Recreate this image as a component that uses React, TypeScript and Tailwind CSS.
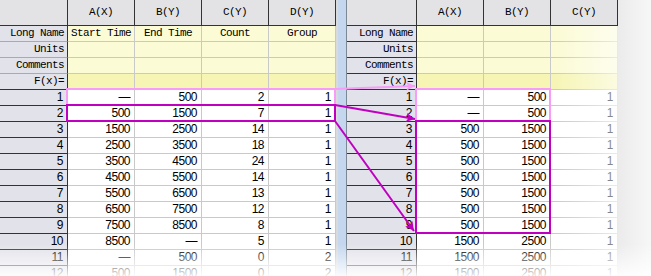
import React from "react";

const LABELS = ["Long Name", "Units", "Comments", "F(x)="];

const LEFT_COLS = ["A(X)", "B(Y)", "C(Y)", "D(Y)"];
const LEFT_LONG = ["Start Time", "End Time", "Count", "Group"];
const LEFT_ROWS: string[][] = [
  ["—", "500", "2", "1"],
  ["500", "1500", "7", "1"],
  ["1500", "2500", "14", "1"],
  ["2500", "3500", "18", "1"],
  ["3500", "4500", "24", "1"],
  ["4500", "5500", "14", "1"],
  ["5500", "6500", "13", "1"],
  ["6500", "7500", "12", "1"],
  ["7500", "8500", "8", "1"],
  ["8500", "—", "5", "1"],
  ["—", "500", "0", "2"],
  ["500", "1500", "0", "2"],
];

const RIGHT_COLS = ["A(X)", "B(Y)", "C(Y)"];
const RIGHT_ROWS: string[][] = [
  ["—", "500", "1"],
  ["—", "500", "1"],
  ["500", "1500", "1"],
  ["500", "1500", "1"],
  ["500", "1500", "1"],
  ["500", "1500", "1"],
  ["500", "1500", "1"],
  ["500", "1500", "1"],
  ["500", "1500", "1"],
  ["1500", "2500", "1"],
  ["1500", "2500", "1"],
  ["1500", "2500", "1"],
];

const mono = "font-['Liberation_Mono',monospace] text-[11px] tracking-[-0.6px] text-black";
const num = "font-['Liberation_Sans',Arial,sans-serif] text-[12px] tracking-[-0.5px] text-black";

function Sheet({
  cols,
  longNames,
  rows,
  headW,
  labelLine,
}: {
  cols: string[];
  longNames: string[];
  rows: string[][];
  headW: string;
  labelLine: string;
}) {
  return (
    <div className="flex flex-col">
      {/* column headers */}
      <div className="flex h-[26px]">
        <div className={`${headW} border-r border-b border-[#333] bg-[#e3e3e6]`} />
        {cols.map((c) => (
          <div
            key={c}
            className={`flex w-[67px] items-center justify-center border-r border-b border-[#333] bg-[#e3e3e6] ${mono}`}
          >
            {c}
          </div>
        ))}
      </div>

      {/* label rows */}
      {LABELS.map((l, i) => (
        <div key={l} className="flex h-[16px]">
          <div
            className={`${headW} border-r border-b border-r-[#333] ${
              i === 3 ? "border-b-[#333]" : labelLine
            } bg-[#e2e2ea] pr-[3px] text-right leading-[15px] whitespace-nowrap ${mono}`}
          >
            {l}
          </div>
          {cols.map((c, j) => (
            <div
              key={c}
              className={`w-[67px] border-r border-b border-[#c9c9c9] ${
                i === 3 ? "bg-[#f6f5b4]" : "bg-[#fbfbd5]"
              } text-center leading-[15px] whitespace-nowrap ${mono}`}
            >
              {i === 0 ? longNames[j] ?? "" : ""}
            </div>
          ))}
        </div>
      ))}

      {/* data rows */}
      {rows.map((r, i) => (
        <div key={i} className="flex h-[16px]">
          <div className={`${headW} border-r border-b border-[#333] bg-[#e2e2ea] pr-[4px] text-right leading-[15px] ${num}`}>
            {i + 1}
          </div>
          {r.map((v, j) => (
            <div
              key={j}
              className={`w-[67px] border-r border-b border-[#c9c9c9] bg-white pr-[4px] text-right leading-[15px] ${num}`}
            >
              {v}
            </div>
          ))}
        </div>
      ))}
    </div>
  );
}

function Arrows() {
  return (
    <svg className="pointer-events-none absolute left-0 top-0" width="651" height="276" viewBox="0 0 651 276">
      <defs>
        <marker id="hp" markerUnits="userSpaceOnUse" markerWidth="10" markerHeight="9" refX="9" refY="4.5" orient="auto">
          <path d="M0,0 L9,4.5 L0,9 L2.5,4.5 z" fill="#f79cf7" />
        </marker>
        <marker id="hm" markerUnits="userSpaceOnUse" markerWidth="10" markerHeight="9" refX="9" refY="4.5" orient="auto">
          <path d="M0,0 L9,4.5 L0,9 L2.5,4.5 z" fill="#c000c0" />
        </marker>
      </defs>
      {/* boxes */}
      <rect x="67" y="89" width="268" height="16" fill="none" stroke="#f79cf7" strokeWidth="2" />
      <rect x="416" y="89" width="134" height="32" fill="none" stroke="#f79cf7" strokeWidth="2" />
      <rect x="67" y="105" width="268" height="16" fill="none" stroke="#c000c0" strokeWidth="2" />
      <rect x="416" y="121" width="134" height="112" fill="none" stroke="#c000c0" strokeWidth="2" />
      {/* arrows */}
      <line x1="335" y1="89" x2="415" y2="86" stroke="#f79cf7" strokeWidth="2" markerEnd="url(#hp)" />
      <line x1="335" y1="105" x2="415" y2="119" stroke="#c000c0" strokeWidth="2" markerEnd="url(#hm)" />
      <line x1="335" y1="121" x2="414" y2="231" stroke="#c000c0" strokeWidth="2" markerEnd="url(#hm)" />
    </svg>
  );
}

export default function App() {
  return (
    <div className="relative h-[276px] w-[651px] overflow-hidden bg-white">
      <div className="flex">
        <Sheet cols={LEFT_COLS} longNames={LEFT_LONG} rows={LEFT_ROWS} headW="w-[68px]" labelLine="border-b-[#a9a9b0]" />

        {/* splitter between the two sheets */}
        <div className="flex h-[276px]">
          <div className="w-[2px] bg-[#dadada]" />
          <div className="w-[8px] bg-[#c4d7ef]" />
          <div className="w-[1px] bg-[#7d8896]" />
        </div>

        <Sheet cols={RIGHT_COLS} longNames={[]} rows={RIGHT_ROWS} headW="w-[70px]" labelLine="border-b-[#333]" />

        <div className="h-[276px] flex-1 bg-gradient-to-r from-[#ebebeb] to-[#f7f7f7]" />
      </div>

      {/* fades over the sheet edges */}
      <div className="pointer-events-none absolute left-[552px] top-[26px] h-[250px] w-[66px] bg-gradient-to-r from-white/0 to-white/60" />
      <div className="pointer-events-none absolute bottom-0 left-0 h-[32px] w-[651px] bg-gradient-to-b from-white/0 to-white/90" />

      <Arrows />
    </div>
  );
}
